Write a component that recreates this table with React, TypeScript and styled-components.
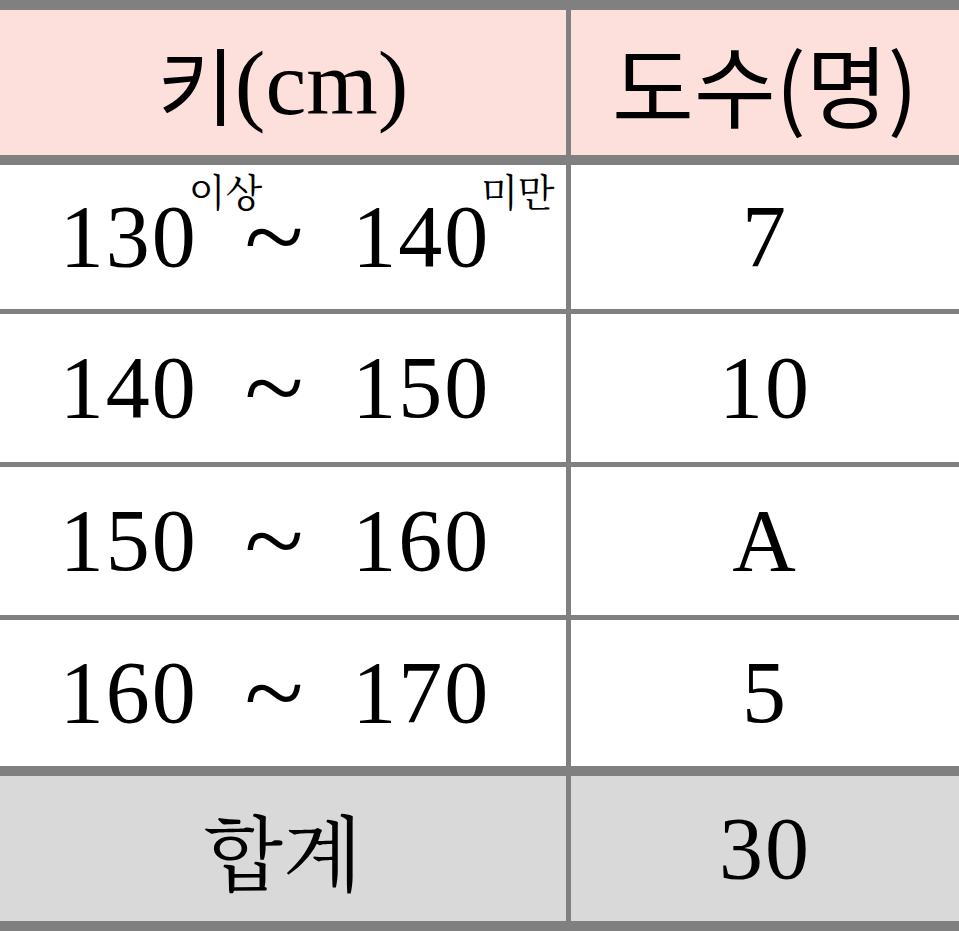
import React from "react";
import styled, { createGlobalStyle } from "styled-components";

const Global = createGlobalStyle`
  html, body { margin: 0; padding: 0; background: #ffffff; }
  body { width: 959px; height: 931px; overflow: hidden; }
`;

const GRAY = "#808080";
const SERIF = `"Liberation Serif", "Times New Roman", serif`;
const KR_SERIF = `"Noto Serif CJK KR", "Noto Sans CJK KR", serif`;
const KR_SANS = `"Noto Sans CJK KR", "Noto Sans", sans-serif`;

const Table = styled.div`
  width: 959px;
  border-top: 10px solid ${GRAY};
  box-sizing: border-box;
`;

const Row = styled.div<{ $h: number; $bg: string; $thick?: boolean }>`
  display: grid;
  grid-template-columns: 571px 1fr;
  height: ${(p) => p.$h + (p.$thick ? 10 : 5)}px;
  background: ${(p) => p.$bg};
  border-bottom: ${(p) => (p.$thick ? 10 : 5)}px solid ${GRAY};
  box-sizing: border-box;
`;

const Cell = styled.div<{ $divider?: boolean; $padRight?: number }>`
  display: flex;
  align-items: center;
  justify-content: center;
  box-sizing: border-box;
  border-right: ${(p) => (p.$divider ? `5px solid ${GRAY}` : "none")};
  padding-right: ${(p) => p.$padRight ?? 0}px;
  white-space: nowrap;
  color: #000;
`;

const Num = styled.span`
  font-family: ${SERIF};
  font-size: 88px;
  letter-spacing: 2px;
  line-height: 1;
  color: #000;
`;

const Tilde = styled.span`
  display: inline-block;
  font-family: ${SERIF};
  font-size: 104px;
  line-height: 1;
  margin: 0 50px 0 48px;
  transform: scaleX(1.05);
`;

const Sup = styled.span`
  display: inline-block;
  width: 0;
  overflow: visible;
  font-family: ${KR_SERIF};
  font-size: 38px;
  line-height: 1;
  vertical-align: top;
  position: relative;
  top: -47px;
  left: -9px;
`;

const SanKR = styled.span`
  font-family: ${KR_SANS};
  font-size: 84px;
  line-height: 1;
`;

const HeadKR = styled(SanKR)`
  font-size: 89px;
`;

const SerifHead = styled.span`
  font-family: ${SERIF};
  font-size: 92px;
  line-height: 1;
`;

const SerifKR = styled.span`
  font-family: ${KR_SERIF};
  font-size: 82px;
  line-height: 1;
`;

type Range = { a: string; b: string; sup?: boolean };

const ranges: { r: Range; v: string; h: number }[] = [
  { r: { a: "130", b: "140", sup: true }, v: "7", h: 144 },
  { r: { a: "140", b: "150" }, v: "10", h: 148 },
  { r: { a: "150", b: "160" }, v: "A", h: 148 },
  { r: { a: "160", b: "170" }, v: "5", h: 146 },
];

export default function App() {
  return (
    <>
      <Global />
      <Table>
        <Row $h={145} $bg="#fde0dc" $thick>
          <Cell $divider>
            <SanKR>키</SanKR>
            <SerifHead>(cm)</SerifHead>
          </Cell>
          <Cell>
            <HeadKR>도수(명)</HeadKR>
          </Cell>
        </Row>
        {ranges.map(({ r, v, h }, i) => (
          <Row key={r.a} $h={h} $bg="#ffffff" $thick={i === ranges.length - 1}>
            <Cell $divider $padRight={16}>
              <Num>{r.a}</Num>
              {r.sup && <Sup>이상</Sup>}
              <Tilde>~</Tilde>
              <Num>{r.b}</Num>
              {r.sup && <Sup>미만</Sup>}
            </Cell>
            <Cell>
              <Num>{v}</Num>
            </Cell>
          </Row>
        ))}
        <Row $h={145} $bg="#d9d9d9" $thick>
          <Cell $divider>
            <SerifKR>합계</SerifKR>
          </Cell>
          <Cell>
            <Num>30</Num>
          </Cell>
        </Row>
      </Table>
    </>
  );
}
